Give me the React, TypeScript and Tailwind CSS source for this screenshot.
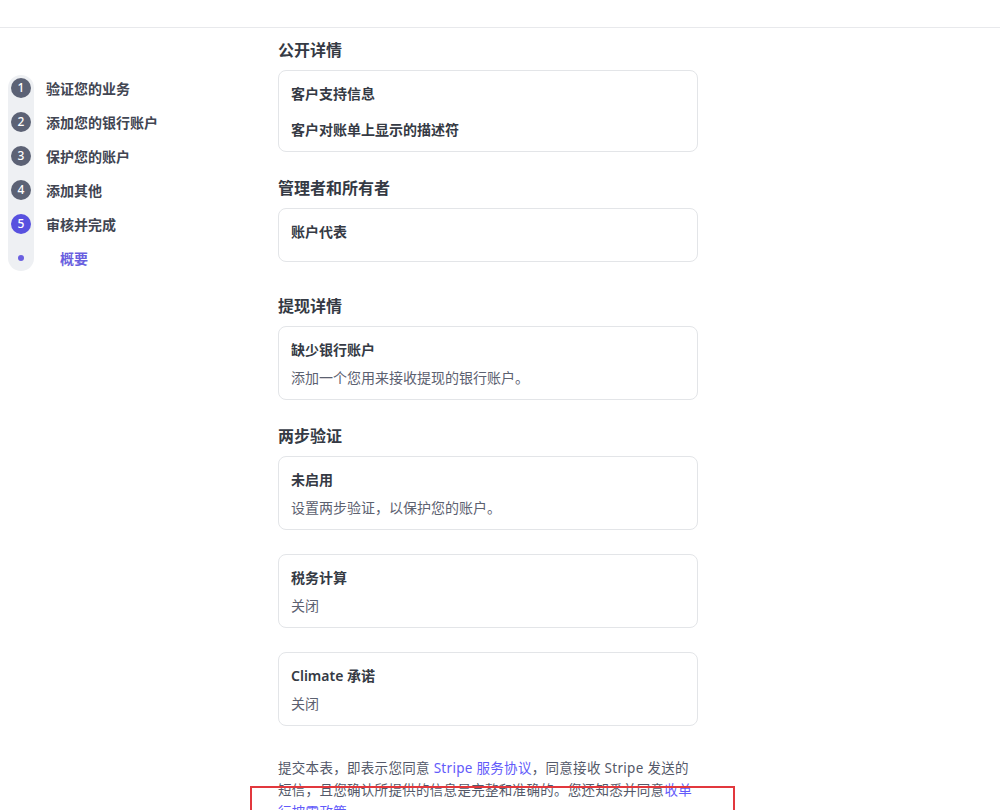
const FONT = { fontFamily: '"Noto Sans", "Noto Sans CJK SC", sans-serif' };

const steps = [
  { n: 1, label: "验证您的业务" },
  { n: 2, label: "添加您的银行账户" },
  { n: 3, label: "保护您的账户" },
  { n: 4, label: "添加其他" },
  { n: 5, label: "审核并完成", active: true },
];

function Card({ title, sub }: { title: string; sub?: string }) {
  return (
    <div className="rounded-[8px] border border-[#e3e5e8] bg-white px-[12px] pt-[14px] pb-[12px]">
      <p className="text-[14px] leading-[18px] font-semibold text-[#353a44]">{title}</p>
      {sub && <p className="mt-[10px] text-[14px] leading-[18px] text-[#5c6170]">{sub}</p>}
    </div>
  );
}

function Heading({ children }: { children: React.ReactNode }) {
  return <h2 className="mb-[8px] text-[16px] leading-[24px] font-semibold text-[#353a44]">{children}</h2>;
}

export default function App() {
  return (
    <div className="h-[810px] w-[1000px] overflow-hidden bg-white" style={FONT}>
      <div className="h-[28px] border-b border-[#e8e9ec]" />

      <div className="flex">
        {/* stepper */}
        <div className="w-[278px] shrink-0 pl-[8px] pt-[47px]">
          <div className="flex">
            <div className="flex w-[26px] flex-col items-center gap-[8px] rounded-full bg-[#eef0f3]">
              {steps.map((s) => (
                <div key={s.n} className="flex h-[26px] items-center justify-center">
                  <span
                    className={
                      s.active
                        ? "flex h-[20px] w-[20px] items-center justify-center rounded-full bg-[#5851df] text-[12px] font-medium text-white"
                        : "flex h-[20px] w-[20px] items-center justify-center rounded-full bg-[#5c6275] text-[12px] font-medium text-white"
                    }
                  >
                    {s.n}
                  </span>
                </div>
              ))}
              <div className="flex h-[26px] items-center justify-center">
                <span className="h-[6px] w-[6px] rounded-full bg-[#6a5fe0]" />
              </div>
            </div>
            <div className="ml-[12px] flex flex-col gap-[8px]">
              {steps.map((s) => (
                <div key={s.n} className="flex h-[26px] items-center text-[14px] font-semibold text-[#414552]">
                  {s.label}
                </div>
              ))}
              <div className="flex h-[26px] items-center pl-[14px] text-[14px] font-semibold text-[#6a5fe0]">概要</div>
            </div>
          </div>
        </div>

        {/* main column */}
        <div className="relative w-[420px] pt-[10px]">
          <Heading>公开详情</Heading>
          <div className="rounded-[8px] border border-[#e3e5e8] bg-white px-[12px] pt-[14px] pb-[12px]">
            <p className="text-[14px] leading-[18px] font-semibold text-[#353a44]">客户支持信息</p>
            <p className="mt-[18px] text-[14px] leading-[18px] font-semibold text-[#353a44]">客户对账单上显示的描述符</p>
          </div>

          <div className="mt-[24px]">
            <Heading>管理者和所有者</Heading>
            <div className="h-[54px] rounded-[8px] border border-[#e3e5e8] bg-white px-[12px] pt-[14px]">
              <p className="text-[14px] leading-[18px] font-semibold text-[#353a44]">账户代表</p>
            </div>
          </div>

          <div className="mt-[32px]">
            <Heading>提现详情</Heading>
            <Card title="缺少银行账户" sub="添加一个您用来接收提现的银行账户。" />
          </div>

          <div className="mt-[24px]">
            <Heading>两步验证</Heading>
            <Card title="未启用" sub="设置两步验证，以保护您的账户。" />
          </div>

          <div className="mt-[24px]">
            <Card title="税务计算" sub="关闭" />
          </div>

          <div className="mt-[24px]">
            <Card title="Climate 承诺" sub="关闭" />
          </div>

          <div className="relative mt-[31px]">
            <p className="w-[440px] text-[13.5px] leading-[22px] tracking-[0.3px] text-[#545969]">
              提交本表，即表示您同意 <span className="text-[#625afa]">Stripe 服务协议</span>，同意接收 Stripe 发送的
              <br />
              短信，且您确认所提供的信息是完整和准确的。您还知悉并同意<span className="text-[#625afa]">收单
              <br />
              行披露政策</span>。
            </p>
            <div className="absolute top-[29px] left-[-28px] h-[60px] w-[485px] border-2 border-[#e2383d]" />
          </div>
        </div>
      </div>
    </div>
  );
}
